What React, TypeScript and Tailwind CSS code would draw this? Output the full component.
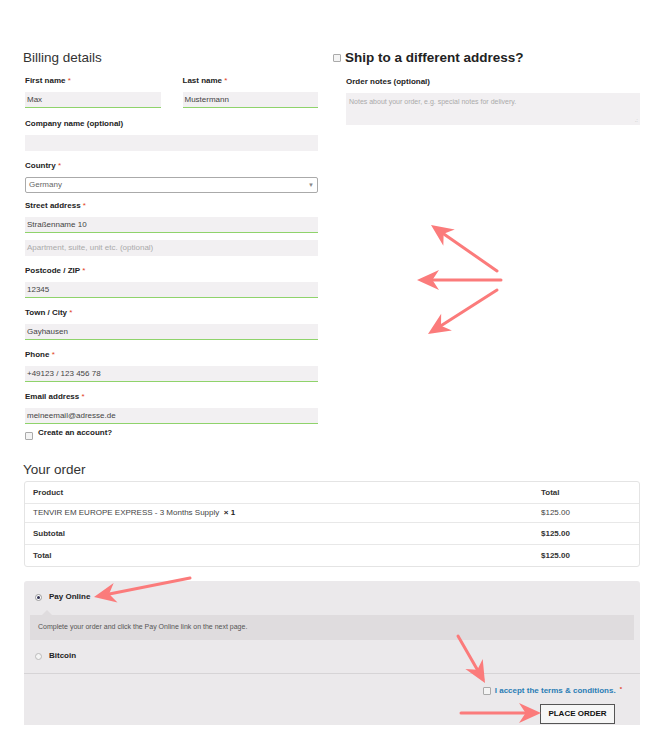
import React from 'react'
import clsx from 'clsx'

const font = { fontFamily: '"Liberation Sans", Arial, sans-serif' }

function Req() {
  return <span className="text-[#e2401c] font-normal"> *</span>
}

function Label({ children, req }: { children: React.ReactNode; req?: boolean }) {
  return (
    <div className="h-[10px] leading-[10px] text-[8px] font-bold text-[#222] mb-[6px]">
      {children}
      {req && <Req />}
    </div>
  )
}

function Input({ value, placeholder, valid }: { value?: string; placeholder?: string; valid?: boolean }) {
  return (
    <div
      className={clsx(
        'h-[16px] bg-[#f2f0f2] px-[2px] flex items-center text-[8px]',
        valid ? 'border-b border-[#8fd36b]' : 'border-b border-[#f2f0f2]',
        value ? 'text-[#444]' : 'text-[#aaa]',
      )}
    >
      {value ?? placeholder}
    </div>
  )
}

function Field({ label, req, value, placeholder, valid = true, className = 'mb-[10px]' }: { label: string; req?: boolean; value?: string; placeholder?: string; valid?: boolean; className?: string }) {
  return (
    <div className={className}>
      <Label req={req}>{label}</Label>
      <Input value={value} placeholder={placeholder} valid={valid} />
    </div>
  )
}

function Checkbox({ className }: { className?: string }) {
  return <span className={clsx('inline-block w-[8px] h-[8px] border border-[#aaa] bg-[#f4f4f4] rounded-[1px]', className)} />
}

function Arrows() {
  const c = '#fb7b7b'
  const head = (x: number, y: number, dx: number, dy: number) => {
    // arrowhead pointing along (dx,dy), tip at x,y
    const len = Math.hypot(dx, dy)
    const ux = dx / len
    const uy = dy / len
    const px = -uy
    const py = ux
    const L = 22
    const W = 10
    const bx = x - ux * L
    const by = y - uy * L
    const nx = x - ux * L * 0.7
    const ny = y - uy * L * 0.7
    return `${x},${y} ${bx + px * W},${by + py * W} ${nx},${ny} ${bx - px * W},${by - py * W}`
  }
  const arrow = (x1: number, y1: number, x2: number, y2: number) => (
    <g>
      <line x1={x1} y1={y1} x2={x2 - (x2 - x1) * 0.08} y2={y2 - (y2 - y1) * 0.08} stroke={c} strokeWidth={3} strokeLinecap="round" />
      <polygon points={head(x2, y2, x2 - x1, y2 - y1)} fill={c} />
    </g>
  )
  return (
    <svg className="absolute inset-0 pointer-events-none" width="662" height="744" viewBox="0 0 662 744">
      {arrow(497, 271, 431, 225)}
      {arrow(501, 280, 417, 280)}
      {arrow(497, 290, 428, 334)}
      {arrow(190, 578, 94, 597)}
      {arrow(458, 636, 485, 683)}
      {arrow(461, 713, 541, 713)}
    </svg>
  )
}

export default function App() {
  return (
    <div className="relative w-[662px] h-[744px] bg-white overflow-hidden" style={font}>
      <div className="pl-[24px] pr-[22px] pt-[50px]">
        <div className="flex">
          {/* Billing */}
          <div className="w-[293px] ml-[1px]">
            <h3 className="text-[13.5px] leading-[16px] text-[#333] -ml-[2px] mb-[10px]">Billing details</h3>
            <div className="flex gap-[22px]">
              <div className="flex-1"><Field label="First name" req value="Max" className="mb-[11px]" /></div>
              <div className="flex-1"><Field label="Last name" req value="Mustermann" className="mb-[11px]" /></div>
            </div>
            <Field label="Company name (optional)" valid={false} value="" />
            <div className="mb-[8px]">
              <Label req>Country</Label>
              <div className="h-[16px] border border-[#aaa] rounded-[2px] bg-white flex items-center justify-between px-[3px] text-[8px] text-[#666]">
                <span>Germany</span>
                <span className="text-[6px] text-[#888]">▼</span>
              </div>
            </div>
            <div className="mb-[7px]">
              <Label req>Street address</Label>
              <Input value="Straßenname 10" valid />
            </div>
            <div className="mb-[10px]">
              <Input placeholder="Apartment, suite, unit etc. (optional)" />
            </div>
            <Field label="Postcode / ZIP" req value="12345" />
            <Field label="Town / City" req value="Gayhausen" />
            <Field label="Phone" req value="+49123 / 123 456 78" />
            <div className="mb-[3px]">
              <Label req>Email address</Label>
              <Input value="meineemail@adresse.de" valid />
            </div>
            <div className="flex items-start gap-[5px] text-[8px] font-bold text-[#222]">
              <Checkbox className="mt-[5px]" />
              <span className="leading-[10px] mt-[1px]">Create an account?</span>
            </div>
          </div>

          {/* Shipping */}
          <div className="ml-[15px] flex-1">
            <div className="flex items-center gap-[4px] h-[16px] mb-[11px]">
              <Checkbox />
              <span className="text-[13.5px] font-bold text-[#222] leading-[16px]">Ship to a different address?</span>
            </div>
            <div className="ml-[13px]">
              <Label>Order notes (optional)</Label>
              <div className="relative h-[32px] bg-[#f2f0f2] px-[3px] pt-[4px] text-[7px] text-[#aaa]">
                Notes about your order, e.g. special notes for delivery.
                <span className="absolute right-[2px] bottom-[0px] text-[6px] text-[#bbb]">.:</span>
              </div>
            </div>
          </div>
        </div>

        {/* Your order */}
        <h3 className="text-[13.5px] leading-[16px] text-[#333] -ml-[1px] mt-[22px] mb-[3px]">Your order</h3>
        <div className="border border-[#e4e4e4] rounded-[3px] text-[8px] text-[#333]">
          <div className="flex items-center h-[22px] font-bold border-b border-[#e8e8e8]">
            <div className="flex-1 pl-[8px]">Product</div>
            <div className="w-[98px]">Total</div>
          </div>
          <div className="flex items-center h-[19px] border-b border-[#e8e8e8]">
            <div className="flex-1 pl-[8px] text-[#444]">
              TENVIR EM EUROPE EXPRESS - 3 Months Supply <b className="text-[#222]">&nbsp;× 1</b>
            </div>
            <div className="w-[98px] text-[#444]">$125.00</div>
          </div>
          <div className="flex items-center h-[22px] font-bold border-b border-[#e8e8e8]">
            <div className="flex-1 pl-[8px]">Subtotal</div>
            <div className="w-[98px]">$125.00</div>
          </div>
          <div className="flex items-center h-[21px] font-bold">
            <div className="flex-1 pl-[8px]">Total</div>
            <div className="w-[98px]">$125.00</div>
          </div>
        </div>

        {/* Payment */}
        <div className="mt-[14px] bg-[#ebe9eb] rounded-t-[3px] h-[144px] flex flex-col">
          <div className="px-[6px] pt-[11px]">
            <div className="flex items-center h-[10px] text-[8px] font-bold text-[#222]">
              <span className="ml-[5px] w-[7px] h-[7px] rounded-full border border-[#999] bg-white flex items-center justify-center">
                <span className="w-[3px] h-[3px] rounded-full bg-[#335]" />
              </span>
              <span className="ml-[7px]">Pay Online</span>
            </div>
            <div className="relative mt-[13px] h-[25px] bg-[#dfdcde] flex items-center pl-[8px] text-[7px] text-[#555]">
              <span className="absolute -top-[5px] left-[12px] w-0 h-0 border-l-[5px] border-r-[5px] border-b-[5px] border-l-transparent border-r-transparent border-b-[#dfdcde]" />
              Complete your order and click the Pay Online link on the next page.
            </div>
            <div className="flex items-center h-[10px] mt-[11px] text-[8px] font-bold text-[#222]">
              <span className="ml-[5px] w-[7px] h-[7px] rounded-full border border-[#bbb] bg-[#f4f4f4]" />
              <span className="ml-[7px]">Bitcoin</span>
            </div>
          </div>
          <div className="mt-[12px] border-t border-[#d6d4d6]" />
          <div className="flex flex-col items-end pr-[18px] pt-[12px]">
            <div className="flex items-center gap-[4px] h-[10px] text-[8px] font-bold">
              <Checkbox />
              <span className="text-[#2a7db5]">I accept the terms &amp; conditions.</span>
              <span className="text-[#e2401c] text-[6px] -mt-[4px]">*</span>
            </div>
            <button className="mt-[8px] mr-[7px] w-[75px] h-[20px] border border-[#555] bg-[#f6f6f6] text-[8px] font-bold text-[#111]">
              PLACE ORDER
            </button>
          </div>
        </div>
      </div>
      <Arrows />
    </div>
  )
}
